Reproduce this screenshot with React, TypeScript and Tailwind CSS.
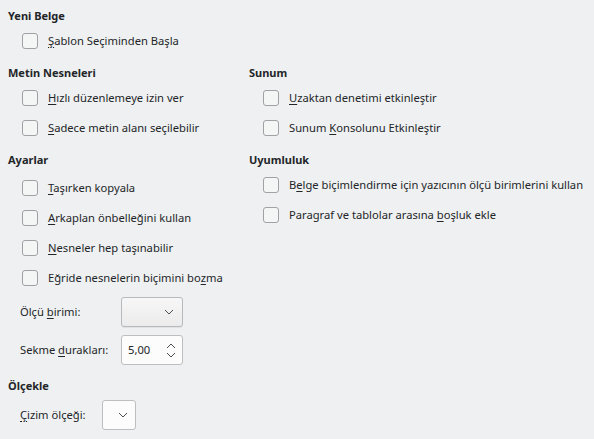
import React from 'react';

const font = { fontFamily: '"Noto Sans", "DejaVu Sans", sans-serif' };

function Chevron({ up = false }: { up?: boolean }) {
	return (
		<svg width="10" height="6" viewBox="0 0 10 6" className="block">
			<polyline
				points={up ? '1,5 5,1 9,5' : '1,1 5,5 9,1'}
				fill="none"
				stroke="#4d4f52"
				strokeWidth="1"
			/>
		</svg>
	);
}

function Heading({ children }: { children: React.ReactNode }) {
	return <div className="h-5 flex items-center text-[11px] font-bold text-[#232629]">{children}</div>;
}

function Check({ children }: { children: React.ReactNode }) {
	return (
		<div className="h-[30px] flex items-center pl-[14px] gap-[10px]">
			<span className="w-4 h-4 rounded-[3px] border border-[#9fa1a4] bg-[#f4f5f5] shrink-0" />
			<span className="text-[11.2px] text-[#232629] whitespace-nowrap">{children}</span>
		</div>
	);
}

const U = ({ children }: { children: React.ReactNode }) => (
	<span className="underline underline-offset-2">{children}</span>
);

export default function App() {
	return (
		<div className="w-[594px] h-[439px] bg-[#eff0f1] pl-2 pt-[6px] overflow-hidden" style={font}>
			<Heading>Yeni Belge</Heading>
			<Check><U>Ş</U>ablon Seçiminden Başla</Check>

			<div className="grid grid-cols-[241px_1fr] mt-[7px]">
				<div>
					<Heading>Metin Nesneleri</Heading>
					<Check><U>H</U>ızlı düzenlemeye izin ver</Check>
					<Check><U>S</U>adece metin alanı seçilebilir</Check>
				</div>
				<div>
					<Heading>Sunum</Heading>
					<Check><U>U</U>zaktan denetimi etkinleştir</Check>
					<Check>Sunum <U>K</U>onsolunu Etkinleştir</Check>
				</div>
			</div>

			<div className="grid grid-cols-[241px_1fr] mt-[7px]">
				<div>
					<Heading>Ayarlar</Heading>
					<div className="pt-[3px]">
						<Check><U>T</U>aşırken kopyala</Check>
						<Check><U>A</U>rkaplan önbelleğini kullan</Check>
						<Check><U>N</U>esneler hep taşınabilir</Check>
						<Check>Eğride nesnelerin biçimini bo<U>z</U>ma</Check>
					</div>
				</div>
				<div>
					<Heading>Uyumluluk</Heading>
					<Check>B<U>e</U>lge biçimlendirme için yazıcının ölçü birimlerini kullan</Check>
					<Check>Paragraf ve tablolar arasına <U>b</U>oşluk ekle</Check>
				</div>
			</div>

			<div className="mt-1 flex flex-col gap-2 text-[11.2px] text-[#232629]">
				<div className="h-[30px] flex items-center pl-3">
					<span className="w-[101px]">Ölçü <U>b</U>irimi:</span>
					<div className="w-[62px] h-[30px] rounded-[3px] border border-[#b7b9bb] bg-gradient-to-b from-[#f7f7f7] to-[#ebebeb] shadow-[0_1px_0_rgba(0,0,0,0.06)] flex items-center justify-end pr-[8px]">
						<Chevron />
					</div>
				</div>
				<div className="h-[30px] flex items-center pl-3">
					<span className="w-[101px]">Sekme <U>d</U>urakları:</span>
					<div className="w-[62px] h-[30px] rounded-[3px] border border-[#bcbebf] bg-[#fcfcfc] flex items-center justify-between pl-[6px] pr-[6px]">
						<span>5,00</span>
						<div className="flex flex-col gap-[3px]">
							<Chevron up />
							<Chevron />
						</div>
					</div>
				</div>
			</div>

			<div className="mt-[11px]">
				<Heading>Ölçekle</Heading>
				<div className="mt-1 h-[30px] flex items-center pl-3 text-[11.2px] text-[#232629]">
					<span className="w-[82px]"><U>Ç</U>izim ölçeği:</span>
					<div className="w-[34px] h-[30px] rounded-[3px] border border-[#bcbebf] bg-[#fcfcfc] flex items-center justify-end pr-[7px]">
						<Chevron />
					</div>
				</div>
			</div>
		</div>
	);
}
